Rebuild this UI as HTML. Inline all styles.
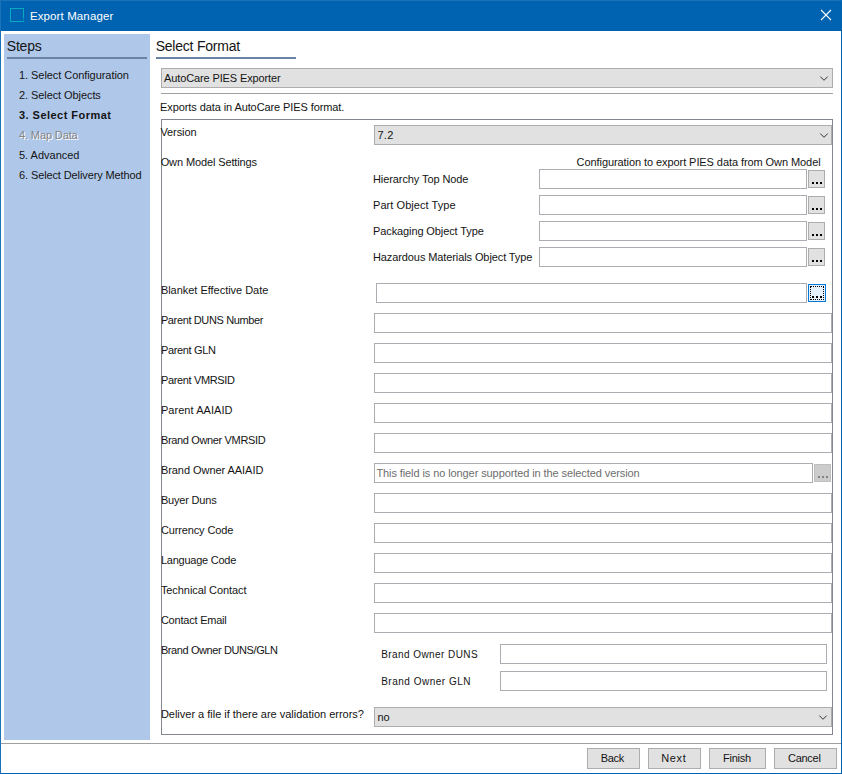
<!DOCTYPE html>
<html>
<head>
<meta charset="utf-8">
<title>Export Manager</title>
<style>
html,body{margin:0;padding:0;}
body{width:842px;height:774px;overflow:hidden;background:#fff;font-family:"Liberation Sans",sans-serif;}
#win{position:relative;width:842px;height:774px;background:#fff;overflow:hidden;}
#win div{position:absolute;box-sizing:border-box;}
.t{white-space:nowrap;color:#141414;font-size:11px;}
.inp{background:#fff;border:1px solid #abadb3;height:20px;}
.cmb{background:#e1e1e1;border:1px solid #adadad;height:20px;}
.btn{background:#e1e1e1;border:1px solid #adadad;}
.dot{background:#000;width:2px;height:2px;}
svg{position:absolute;overflow:visible;}
</style>
</head>
<body>
<div id="win">
<!-- title bar -->
<div style="left:0;top:0;width:842px;height:31px;background:#0063b1;"></div>
<div style="left:0;top:0;width:842px;height:1px;background:#1a72b9;"></div>
<div style="left:0;top:0;width:1px;height:774px;background:#1a72b9;"></div>
<div style="left:841px;top:0;width:1px;height:774px;background:#0063b1;"></div>
<div style="left:0;top:773px;width:842px;height:1px;background:#0063b1;"></div>
<!-- icon -->
<div style="left:10px;top:8px;width:14px;height:1px;background:#0aa9c2;"></div><div style="left:10px;top:8px;width:1px;height:14px;background:#0aa9c2;"></div><div style="left:10px;top:21px;width:14px;height:1px;background:#0aa9c2;"></div><div style="left:23px;top:8px;width:1px;height:10px;background:#0aa9c2;"></div><div style="left:23px;top:19px;width:1px;height:1px;background:#0aa9c2;"></div>
<!-- close X -->
<svg style="left:821px;top:10px;" width="10" height="10" viewBox="0 0 10 10"><path d="M0 0L10 10M10 0L0 10" fill="none" stroke="#fff" stroke-width="1.1"/></svg>
<!-- steps panel -->
<div style="left:4px;top:34px;width:146px;height:706px;background:#afc7e9;"></div>
<div style="left:7px;top:57px;width:140px;height:2px;background:#6883a4;"></div>
<div style="left:156px;top:57px;width:140px;height:2px;background:#6883a4;"></div>
<!-- top combo -->
<div class="cmb" style="left:161px;top:68px;width:672px;"></div>
<svg style="left:820px;top:76px;" width="8" height="6" viewBox="0 0 8 6"><path d="M0.3 0.6L4 4.3L7.7 0.6" fill="none" stroke="#333" stroke-width="1"/></svg>
<div style="left:161px;top:93px;width:672px;height:1px;background:#a0a0a0;"></div>
<!-- main panel -->
<div style="left:161px;top:119px;width:672px;height:616px;border:1px solid #828790;"></div>
<!-- version combo -->
<div class="cmb" style="left:374px;top:125px;width:458px;"></div>
<svg style="left:820px;top:133px;" width="8" height="6" viewBox="0 0 8 6"><path d="M0.3 0.6L4 4.3L7.7 0.6" fill="none" stroke="#333" stroke-width="1"/></svg>
<!-- own model inputs -->
<div class="inp" style="left:539px;top:169px;width:268px;"></div>
<div class="inp" style="left:539px;top:195px;width:268px;"></div>
<div class="inp" style="left:539px;top:221px;width:268px;"></div>
<div class="inp" style="left:539px;top:247px;width:268px;"></div>
<div class="btn" style="left:808px;top:170px;width:17px;height:18px;"></div>
<div class="btn" style="left:808px;top:196px;width:17px;height:18px;"></div>
<div class="btn" style="left:808px;top:222px;width:17px;height:18px;"></div>
<div class="btn" style="left:808px;top:248px;width:17px;height:18px;"></div>
<div class="dot" style="left:812px;top:182px;"></div><div class="dot" style="left:816px;top:182px;"></div><div class="dot" style="left:820px;top:182px;"></div>
<div class="dot" style="left:812px;top:208px;"></div><div class="dot" style="left:816px;top:208px;"></div><div class="dot" style="left:820px;top:208px;"></div>
<div class="dot" style="left:812px;top:234px;"></div><div class="dot" style="left:816px;top:234px;"></div><div class="dot" style="left:820px;top:234px;"></div>
<div class="dot" style="left:812px;top:260px;"></div><div class="dot" style="left:816px;top:260px;"></div><div class="dot" style="left:820px;top:260px;"></div>
<!-- blanket effective date -->
<div class="inp" style="left:376px;top:283px;width:431px;"></div>
<div style="left:808px;top:284px;width:18px;height:18px;background:#e5f1fb;border:1px solid #0078d7;"></div>
<div style="left:810px;top:286px;width:14px;height:14px;border:1px dotted #000;"></div>
<div class="dot" style="left:812px;top:296px;"></div><div class="dot" style="left:816px;top:296px;"></div><div class="dot" style="left:820px;top:296px;"></div>
<!-- wide inputs -->
<div class="inp" style="left:374px;top:313px;width:458px;"></div>
<div class="inp" style="left:374px;top:343px;width:458px;"></div>
<div class="inp" style="left:374px;top:373px;width:458px;"></div>
<div class="inp" style="left:374px;top:403px;width:458px;"></div>
<div class="inp" style="left:374px;top:433px;width:458px;"></div>
<div class="inp" style="left:374px;top:463px;width:439px;"></div>
<div style="left:814px;top:464px;width:17px;height:18px;background:#cccccc;border:1px solid #bfbfbf;"></div>
<div class="dot" style="left:818px;top:476px;background:#838383;"></div><div class="dot" style="left:822px;top:476px;background:#838383;"></div><div class="dot" style="left:826px;top:476px;background:#838383;"></div>
<div class="inp" style="left:374px;top:493px;width:458px;"></div>
<div class="inp" style="left:374px;top:523px;width:458px;"></div>
<div class="inp" style="left:374px;top:553px;width:458px;"></div>
<div class="inp" style="left:374px;top:583px;width:458px;"></div>
<div class="inp" style="left:374px;top:613px;width:458px;"></div>
<!-- brand owner duns/gln -->
<div class="inp" style="left:500px;top:644px;width:327px;"></div>
<div class="inp" style="left:500px;top:671px;width:327px;"></div>
<!-- deliver combo -->
<div class="cmb" style="left:374px;top:707px;width:458px;"></div>
<svg style="left:819px;top:715px;" width="8" height="6" viewBox="0 0 8 6"><path d="M0.3 0.6L4 4.3L7.7 0.6" fill="none" stroke="#333" stroke-width="1"/></svg>
<!-- bottom separator and buttons -->
<div style="left:1px;top:743px;width:840px;height:1px;background:#a0a0a0;"></div>
<div class="btn" style="left:587px;top:748px;width:53px;height:21px;"></div>
<div class="btn" style="left:648px;top:748px;width:53px;height:21px;"></div>
<div class="btn" style="left:709px;top:748px;width:57px;height:21px;"></div>
<div class="btn" style="left:774px;top:748px;width:63px;height:21px;"></div>

<div class="t" style="left:29.90px;top:8.87px;font-size:11.5px;line-height:15.5px;letter-spacing:0.119px;color:#fff;">Export Manager</div>
<div class="t" style="left:6.80px;top:37.15px;font-size:14px;line-height:18px;letter-spacing:-0.202px;">Steps</div>
<div class="t" style="left:155.70px;top:37.15px;font-size:14px;line-height:18px;letter-spacing:-0.226px;">Select Format</div>
<div class="t" style="left:19.00px;top:67.69px;font-size:11px;line-height:15px;letter-spacing:-0.061px;">1. Select Configuration</div>
<div class="t" style="left:19.00px;top:87.69px;font-size:11px;line-height:15px;letter-spacing:-0.080px;">2. Select Objects</div>
<div class="t" style="left:19.00px;top:107.69px;font-size:11px;line-height:15px;letter-spacing:0.463px;font-weight:bold;">3. Select Format</div>
<div class="t" style="left:19.00px;top:127.69px;font-size:11px;line-height:15px;letter-spacing:-0.120px;color:#858585;text-shadow:1px 1px 0 #fff;">4. Map Data</div>
<div class="t" style="left:19.00px;top:147.69px;font-size:11px;line-height:15px;letter-spacing:-0.006px;">5. Advanced</div>
<div class="t" style="left:19.00px;top:167.69px;font-size:11px;line-height:15px;letter-spacing:-0.110px;">6. Select Delivery Method</div>
<div class="t" style="left:164.10px;top:70.69px;font-size:11px;line-height:15px;letter-spacing:-0.129px;">AutoCare PIES Exporter</div>
<div class="t" style="left:160.10px;top:99.69px;font-size:11px;line-height:15px;letter-spacing:-0.095px;">Exports data in AutoCare PIES format.</div>
<div class="t" style="left:160.40px;top:124.69px;font-size:11px;line-height:15px;letter-spacing:-0.072px;">Version</div>
<div class="t" style="left:377.40px;top:127.69px;font-size:11px;line-height:15px;letter-spacing:0.301px;">7.2</div>
<div class="t" style="left:160.70px;top:154.69px;font-size:11px;line-height:15px;letter-spacing:-0.119px;">Own Model Settings</div>
<div class="t" style="left:576.60px;top:154.69px;font-size:11px;line-height:15px;letter-spacing:-0.076px;">Configuration to export PIES data from Own Model</div>
<div class="t" style="left:373.00px;top:171.69px;font-size:11px;line-height:15px;letter-spacing:-0.095px;">Hierarchy Top Node</div>
<div class="t" style="left:373.00px;top:197.69px;font-size:11px;line-height:15px;letter-spacing:0.060px;">Part Object Type</div>
<div class="t" style="left:373.00px;top:223.69px;font-size:11px;line-height:15px;letter-spacing:-0.106px;">Packaging Object Type</div>
<div class="t" style="left:373.00px;top:249.69px;font-size:11px;line-height:15px;letter-spacing:-0.101px;">Hazardous Materials Object Type</div>
<div class="t" style="left:160.90px;top:282.69px;font-size:11px;line-height:15px;letter-spacing:-0.029px;">Blanket Effective Date</div>
<div class="t" style="left:160.90px;top:312.69px;font-size:11px;line-height:15px;letter-spacing:-0.368px;">Parent DUNS Number</div>
<div class="t" style="left:160.90px;top:342.69px;font-size:11px;line-height:15px;letter-spacing:-0.339px;">Parent GLN</div>
<div class="t" style="left:160.90px;top:372.69px;font-size:11px;line-height:15px;letter-spacing:-0.350px;">Parent VMRSID</div>
<div class="t" style="left:160.90px;top:402.69px;font-size:11px;line-height:15px;letter-spacing:0.059px;">Parent AAIAID</div>
<div class="t" style="left:160.90px;top:432.69px;font-size:11px;line-height:15px;letter-spacing:-0.348px;">Brand Owner VMRSID</div>
<div class="t" style="left:160.90px;top:462.69px;font-size:11px;line-height:15px;letter-spacing:-0.052px;">Brand Owner AAIAID</div>
<div class="t" style="left:376.40px;top:465.69px;font-size:11px;line-height:15px;letter-spacing:-0.092px;color:#6d6d6d;">This field is no longer supported in the selected version</div>
<div class="t" style="left:160.90px;top:492.69px;font-size:11px;line-height:15px;letter-spacing:-0.188px;">Buyer Duns</div>
<div class="t" style="left:160.90px;top:522.69px;font-size:11px;line-height:15px;letter-spacing:-0.130px;">Currency Code</div>
<div class="t" style="left:160.90px;top:552.69px;font-size:11px;line-height:15px;letter-spacing:-0.238px;">Language Code</div>
<div class="t" style="left:160.90px;top:582.69px;font-size:11px;line-height:15px;letter-spacing:-0.072px;">Technical Contact</div>
<div class="t" style="left:160.90px;top:612.69px;font-size:11px;line-height:15px;letter-spacing:-0.214px;">Contact Email</div>
<div class="t" style="left:160.90px;top:642.69px;font-size:11px;line-height:15px;letter-spacing:-0.401px;">Brand Owner DUNS/GLN</div>
<div class="t" style="left:381.20px;top:647.53px;font-size:10px;line-height:14px;letter-spacing:0.429px;">Brand Owner DUNS</div>
<div class="t" style="left:381.20px;top:674.53px;font-size:10px;line-height:14px;letter-spacing:0.509px;">Brand Owner GLN</div>
<div class="t" style="left:160.90px;top:706.69px;font-size:11px;line-height:15px;letter-spacing:-0.013px;">Deliver a file if there are validation errors?</div>
<div class="t" style="left:377.40px;top:709.69px;font-size:11px;line-height:15px;letter-spacing:-0.025px;">no</div>
<div class="t" style="left:600.70px;top:750.69px;font-size:11px;line-height:15px;letter-spacing:-0.267px;">Back</div>
<div class="t" style="left:661.20px;top:750.69px;font-size:11px;line-height:15px;letter-spacing:0.644px;">Next</div>
<div class="t" style="left:723.00px;top:750.69px;font-size:11px;line-height:15px;letter-spacing:-0.241px;">Finish</div>
<div class="t" style="left:788.00px;top:750.69px;font-size:11px;line-height:15px;letter-spacing:-0.275px;">Cancel</div>
</div>
</body>
</html>
